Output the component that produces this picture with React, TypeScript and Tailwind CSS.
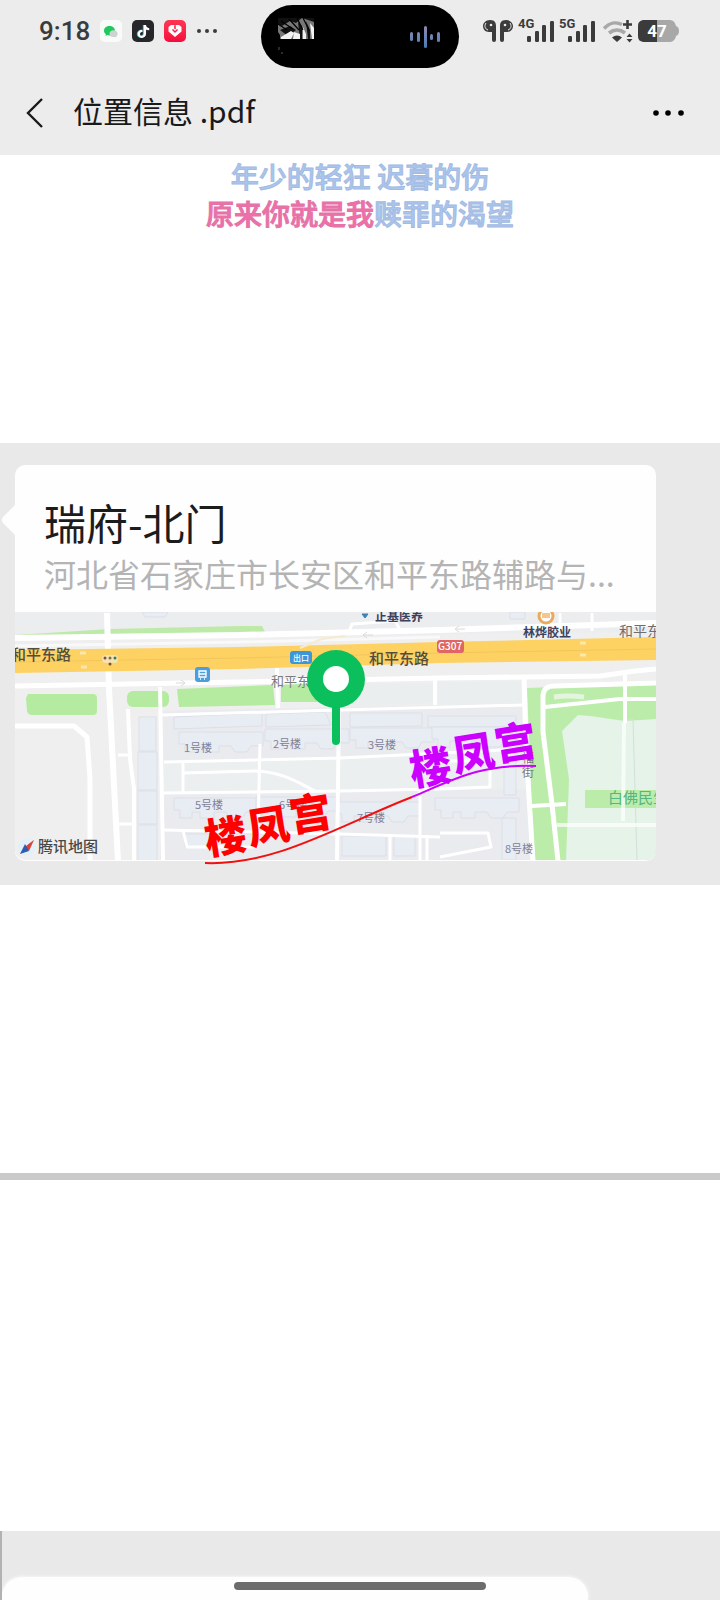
import React from 'react';
import { FaTiktok } from 'react-icons/fa';

const BARS = [
  { x: 0, h: 6 },
  { x: 8, h: 11 },
  { x: 15, h: 17 },
  { x: 23, h: 21 },
];

const BLOCK_LABELS = [
  { text: '1号楼', x: 184, y: 753 },
  { text: '2号楼', x: 273, y: 749 },
  { text: '3号楼', x: 368, y: 750 },
  { text: '5号楼', x: 195, y: 810 },
  { text: '6号楼', x: 279, y: 810 },
  { text: '7号楼', x: 357, y: 823 },
  { text: '8号楼', x: 505, y: 854 },
];

const MARKS = [
  { fill: '#ff0000', glyphs: [{ c: '楼', x: 207, y: 856 }, { c: '凤', x: 250, y: 846 }, { c: '宫', x: 292, y: 833 }] },
  { fill: '#cc00ff', glyphs: [{ c: '楼', x: 412, y: 787 }, { c: '凤', x: 455, y: 773 }, { c: '宫', x: 497, y: 762 }] },
];

// outline of a slab block seen from above, notched along the bottom edge
const SLAB = 'M0 0H84V14H72L68 20H56L52 14H40V20H26V14H18V20H6V12H0Z';

function Signal({ label }: { label: string }) {
  return (
    <span className="flex items-start">
      <span className="h-[22px] w-[9px] overflow-visible text-[13px] leading-[7px] font-bold whitespace-nowrap">{label}</span>
      <svg className="h-[22px] w-[27px]" viewBox="0 0 27 22" fill="#3b3b3b">
        {BARS.map(b => (
          <rect key={b.x} x={b.x} y={22 - b.h} width="4" height={b.h} rx="1.2" />
        ))}
      </svg>
    </span>
  );
}

function StatusBar() {
  return (
    <div className="grid h-[70px] grid-cols-[1fr_198px_1fr] pt-[5px] text-[#3b3b3b]">
      <div className="flex h-[52px] items-center gap-[10px] pl-[39px]">
        <span className="w-[51px] font-[Roboto,sans-serif] text-[26px] leading-none font-medium">9:18</span>
        <span className="size-[22px] shrink-0 rounded-[5px] bg-[#f9fafa]">
          <svg viewBox="0 0 22 22" className="size-full">
            <path d="M9.500 6C6.500 6 4 8 4 10.800c0 1.500.7 2.700 1.900 3.500l-.4 1.700 2-.9c.6.200 1.300.3 2 .3 3 0 5.500-2 5.500-4.700S12.500 6 9.500 6Z" fill="#20c95c" />
            <path d="M13.500 10.300c-2.300 0-4 1.500-4 3.400s1.700 3.400 4 3.400c.5 0 1-.1 1.500-.2l1.500.7-.3-1.300c.9-.6 1.400-1.600 1.400-2.600 0-1.900-1.800-3.400-4.100-3.400Z" fill="#cfd2d2" />
          </svg>
        </span>
        <span className="flex size-[22px] shrink-0 items-center justify-center rounded-[5px] bg-[#27262b] text-white">
          <FaTiktok className="size-[13px] drop-shadow-[-1px_0_0_#3fd0d0]" />
        </span>
        <span className="size-[22px] shrink-0 rounded-[5px] bg-linear-to-b from-[#ff3552] to-[#f5083d]">
          <svg viewBox="0 0 22 22" className="size-full">
            <path d="M11 17 4.500 11.500V7L7 5h3l1 1.500L12 5h3l2.500 2v4.500Z" fill="#fff" />
            <path d="M11 6v3M8.500 9.500 11 12 13.500 9.500" stroke="#f8204a" strokeWidth="1.500" fill="none" />
          </svg>
        </span>
        <svg viewBox="0 0 22 6" className="h-[6px] w-[22px]" fill="#3b3b3b">
          <circle cx="3" cy="3" r="2" />
          <circle cx="11" cy="3" r="2" />
          <circle cx="19" cy="3" r="2" />
        </svg>
      </div>

      <div className="flex h-[63px] items-start justify-between rounded-full bg-black pt-[13px] pr-[19px] pl-[17px]">
        <svg viewBox="0 0 36 36" className="size-[36px]">
          <path d="M0 0H36V21H2V17L0 14Z" fill="#777" />
          <path d="M0 0H24L18 5 12 3 4 8 0 6ZM2 12 12 8 18 12 10 18ZM20 4l4 4v13h-2ZM28 3l4 9v9h-2ZM24 0h12v4l-6-2Z" fill="#111" />
          <path d="M3 19 13 13l3 2-3 6H3ZM16 14l6 2v5h-7ZM25 9l3 7v5h-3ZM32 5l4 5v11h-2Z" fill="#f2f2f2" />
          <path d="M0 6 9 12M3 3l12 8M11 1l10 11M19 0l6 12M25 0l6 12" stroke="#000" strokeWidth="1.200" />
          <path d="M1 29v3M4 34v2" stroke="#555" />
        </svg>
        <svg viewBox="0 0 30 24" className="mt-[7px] h-[24px] w-[30px]">
          <defs>
            <linearGradient id="wave" x1="0" y1="0" x2="0" y2="24" gradientUnits="userSpaceOnUse">
              <stop offset="0" stopColor="#9a86b0" />
              <stop offset="1" stopColor="#3f7fb8" />
            </linearGradient>
          </defs>
          <g fill="url(#wave)">
            <rect x="0" y="7" width="3" height="9" rx="1.500" />
            <rect x="7" y="7" width="3" height="10" rx="1.500" />
            <rect x="14" y="1" width="3" height="22" rx="1.500" />
            <rect x="20" y="9" width="3" height="6" rx="1.500" />
            <rect x="27" y="7" width="3" height="10" rx="1.500" />
          </g>
        </svg>
      </div>

      <div className="flex h-[52px] items-center justify-end gap-[5px] pr-[41px] font-[Roboto,sans-serif]">
        <svg viewBox="0 0 30 22" className="h-[22px] w-[30px]">
          <g fill="#3b3b3b">
            <path d="M7 0c5 0 6 3 6 6v14a2 2 0 0 1-4 0v-8H6C2 12 0 9 0 6s3-6 7-6Z" />
            <path d="M23 0c-5 0-6 3-6 6v14a2 2 0 0 0 4 0v-8h3c4 0 6-3 6-6s-3-6-7-6Z" />
          </g>
          <path d="M3 3C1 6 2 9 5 10M27 3c2 3 1 6-2 7" stroke="#ececec" fill="none" />
          <circle cx="8" cy="5" r="1.300" fill="#ececec" />
          <circle cx="22" cy="5" r="1.300" fill="#ececec" />
        </svg>
        <Signal label="4G" />
        <Signal label="5G" />
        <svg viewBox="0 0 30 23" className="ml-[3px] h-[23px] w-[30px]">
          <path d="M1 8.500C6 3 13 1.500 19 4.500M6 13c5-4 11-4 16 0" stroke="#a8a8a8" strokeWidth="3.600" fill="none" />
          <path d="M9 17.500q5-4 10 0l-5 4.500Z" fill="#3b3b3b" />
          <path d="M24.500 0v9M20 4.500h9" stroke="#3b3b3b" strokeWidth="2.600" />
          <path d="M23.500 17 26.500 13.500 29.500 17ZM23.500 19 26.500 22.500 29.500 19Z" fill="#3b3b3b" />
        </svg>
        <span className="relative flex h-[22px] w-[41px] items-center">
          <svg viewBox="0 0 41 22" className="absolute inset-0 size-full">
            <path d="M7 0h24c4 0 6 2 7 6 4 1 4 9 0 10-1 4-3 6-7 6H7c-5 0-7-2-7-7V7c0-5 2-7 7-7Z" fill="#a8a8a8" />
            <path d="M7 0h12v22H7c-5 0-7-2-7-7V7c0-5 2-7 7-7Z" fill="#3b3b3b" />
          </svg>
          <span className="relative w-[38px] text-center text-[17px] leading-none font-bold text-white">47</span>
        </span>
      </div>
    </div>
  );
}

function TitleBar() {
  return (
    <div className="flex h-[85px] items-center pr-[36px] pl-[25px]">
      <button type="button" aria-label="返回" className="mr-[28px]">
        <svg viewBox="0 0 20 32" className="h-[32px] w-[20px]">
          <path d="M17 2 3 16 17 30" fill="none" stroke="#1a1a1a" strokeWidth="2.400" />
        </svg>
      </button>
      <h1 className="flex-1 pb-[5px] text-[30px] leading-[40px] text-[#191919]">位置信息 .pdf</h1>
      <button type="button" aria-label="更多">
        <svg viewBox="0 0 32 8" className="h-[8px] w-[32px]">
          <circle cx="4" cy="4" r="2.800" />
          <circle cx="16" cy="4" r="2.800" />
          <circle cx="29" cy="4" r="2.800" />
        </svg>
      </button>
    </div>
  );
}

function MapTile() {
  return (
    <svg viewBox="15 613 641 248" className="block h-auto w-full rounded-b-[10px]">
      <rect x="15" y="613" width="641" height="248" fill="#efefef" />
      <path d="M15 613H656V633L15 640Z" fill="#ecedef" />
      <path d="M160 712 525 704 531 861H160Z" fill="#eaebef" />
      <path d="M164 763 338 758 340 792 164 794ZM340 760 520 750 526 790 340 792Z" fill="#ecefef" />
      <path d="M342 684H434V704L342 708ZM438 683H522V704L438 706Z" fill="#eaeeef" />

      {/* greens */}
      <path d="M15 636 110 630 240 627 262 627 265 633 110 637 15 639Z" fill="#bdeaa9" />
      <g fill="#b4eba0">
        <path d="M28 695H93Q97 695 97 699V712Q97 716 93 716H32Q28 716 27 712L26 699Z" />
        <rect x="127" y="692" width="42" height="16" rx="6" />
        <path d="M177 690 273 686 275 706 179 708ZM281 686 322 684V703H281Z" />
      </g>
      <path d="M527 689 656 684V861H534Z" fill="#bcecaa" />
      <path d="M562 732 578 716 590 717 625 722 656 720V861H566L569 780Z" fill="#e5f3e9" />
      <path d="M626 722 633 720 637 861" stroke="#d3dfd8" fill="none" />
      <rect x="585" y="791" width="71" height="18" fill="#bcecaa" />

      {/* buildings */}
      <g fill="#e8ecf3" stroke="#dddfe7">
        <rect x="139" y="718" width="17" height="34" />
        <rect x="138" y="753" width="19" height="38" />
        <rect x="138" y="792" width="19" height="33" />
        <rect x="138" y="826" width="19" height="36" />
        <path d="M174 718 262 714V727L174 730ZM266 715 325 713 331 726 266 728ZM350 714H422V727L350 728ZM428 717H516V728H428Z" />
        <path d={SLAB} transform="translate(179 733)" />
        <path d={SLAB} transform="translate(265 730)" />
        <path d={SLAB} transform="translate(350 729)" />
        <path d={SLAB} transform="translate(432 728)" />
        <path d={SLAB} transform="translate(174 799)" />
        <path d={SLAB} transform="translate(256 798)" />
        <path d={SLAB} transform="translate(336 803)" />
        <path d={SLAB} transform="translate(435 799)" />
        <path d="M185 835H256V848H185ZM342 837H386V857H342ZM394 837H415V857H394Z" />
        <path d="M504 761H516V796H504ZM502 819H516V861H502Z" />
        <path d="M142 613H168L165 618H145ZM510 613H525V620H510Z" />
      </g>

      {/* side streets */}
      <g fill="none" stroke="#fff" strokeLinejoin="round">
        <path d="M15 639 240 636 440 631 656 624" strokeWidth="6" />
        <path d="M15 647 240 643 440 638" strokeWidth="3" opacity=".6" />
        <path d="M15 687 240 683 440 679 600 677 635 672 656 670" strokeWidth="5" />
        <path d="M107 614 109 690 118 862" strokeWidth="6" />
        <path d="M15 727H74L87 738 90 780V862" strokeWidth="5" />
        <path d="M128 710 130 760 134 790V862M160 688 163 862M339 708 337 862M277 669 278 709M435 680V706" strokeWidth="4" />
        <path d="M118 756H132M118 825H134M162 716 340 711 523 706M164 763 340 759 525 750M164 794 340 792 440 790M164 831 340 835 440 838" strokeWidth="3" />
        <path d="M183 763V793M260 745 258 830M183 831 187 848H258M390 836V861M420 790V861M183 774 255 772C285 773 300 785 315 792M440 790 490 788V762H440M440 834H488L491 848 440 858M427 836V861" strokeWidth="3" />
        <path d="M348 636 352 625 395 622 402 634M592 614V632M560 614V632" strokeWidth="3" />
        <path d="M524 678 526 750 533 862" strokeWidth="5" />
        <path d="M558 862 552 805 543 733 543 696C544 689 548 687 554 687L656 684" strokeWidth="5" />
        <path d="M545 708 620 700H656M625 676V724M532 807 566 805" strokeWidth="4" />
        <path d="M557 826H656M624 724 623 822" strokeWidth="4" opacity=".7" />
      </g>

      {/* main road */}
      <path d="M15 651 240 648 440 643 656 638V661L440 664 240 670 15 674Z" fill="#fdd263" />
      <path d="M15 663 240 659 440 654 656 650" stroke="#f3c65a" fill="none" />
      <path d="M300 649 322 640 345 637" stroke="#f7ead0" strokeWidth="2" fill="none" />
      <path d="M80 654h6M81 668h6M580 644h6M580 656h6" stroke="#fbe6ae" strokeWidth="3" />
      <path d="M456 630h9m-6-3-4 3 4 3M364 636h9m-6-3-4 3 4 3M176 684h9m-4-3 4 3-4 3" stroke="#dadada" fill="none" />
      <rect x="102" y="656" width="16" height="8" rx="4" fill="#f5e3b0" />
      <circle cx="105" cy="659" r="1.500" fill="#8d4a3a" />
      <circle cx="110" cy="659" r="1.500" fill="#7c7244" />
      <circle cx="115" cy="659" r="1.500" fill="#387a5c" />
      <circle cx="110" cy="665" r="1.500" fill="#7b5236" />

      {/* points of interest */}
      <rect x="195" y="668" width="15" height="15" rx="3" fill="#4a9fdc" />
      <path d="M199 672h7v6h-7ZM199 675h7M200 680h1m3 0h1" stroke="#fff" strokeWidth="1.300" fill="none" />
      <rect x="290" y="652" width="22" height="13" rx="3" fill="#3b97da" />
      <text x="293" y="662" fontSize="8" fontWeight="500" fill="#fff">出口</text>
      <rect x="437" y="641" width="27" height="13" rx="3" fill="#df6664" />
      <text x="438" y="651" fontSize="10" fontWeight="500" fill="#fff">G307</text>
      <circle cx="546" cy="617" r="7" stroke="#eba95d" strokeWidth="3" fill="#fff" />
      <path d="M542 614h8v5h-8Z" fill="#f5c68e" />
      <path d="M362 615h6l-3 4Z" fill="#3a82b8" stroke="#3a82b8" />

      <g fontSize="15" fontWeight="500" fill="#544c3c">
        <text x="11" y="661">和平东路</text>
        <text x="369" y="665">和平东路</text>
      </g>
      <text x="271" y="687" fontSize="13" fill="#7c7c80">和平东路</text>
      <text x="619" y="637" fontSize="14" fill="#6d6d70">和平东路</text>
      <g fontSize="12" fontWeight="700" fill="#3c415c">
        <text x="375" y="622">正基医养</text>
        <text x="523" y="638">林烨胶业</text>
      </g>
      <g fontSize="11" fill="#7d8199">
        {BLOCK_LABELS.map(l => (
          <text key={l.text} x={l.x} y={l.y}>{l.text}</text>
        ))}
      </g>
      <g fontSize="12" fill="#77777c">
        <text x="522" y="764">福</text>
        <text x="522" y="778">街</text>
      </g>
      <text x="608" y="804" fontSize="15" fill="#55b584">白佛民生</text>
      <path d="M554 698q14-2 30 0" stroke="#e3f5dd" strokeWidth="5" fill="none" />

      {/* provider */}
      <circle cx="27" cy="848" r="9" fill="#e3f0fa" />
      <path d="M34 841 29 852 25 848Z" fill="#d8453b" />
      <path d="M34 841 25 848 20 855Z" fill="#d8453b" />
      <path d="M20 855 29 852 25 845Z" fill="#2f5cae" />
      <text x="38" y="853" fontSize="15" fontWeight="500" fill="#48484a">腾讯地图</text>

      {/* pin */}
      <rect x="332" y="700" width="8" height="46" rx="4" fill="#0bbf5c" />
      <circle cx="336" cy="680" r="29" fill="#0bbf5c" />
      <circle cx="336" cy="680" r="13" fill="#fff" />
    </svg>
  );
}

function Watermark() {
  return (
    <svg viewBox="15 613 641 248" className="pointer-events-none absolute inset-x-0 top-0 h-auto w-full overflow-visible">
      {MARKS.map(m => (
        <g key={m.fill} fill={m.fill} fontSize="42" fontWeight="900">
          {m.glyphs.map(g => (
            <text key={g.c} x={g.x} y={g.y} transform={`rotate(-9 ${g.x} ${g.y})`}>{g.c}</text>
          ))}
        </g>
      ))}
      <path d="M205 864C275 867 340 826 412 798" fill="none" stroke="#f01010" strokeWidth="2" />
      <path d="M412 798C455 780 480 765 536 767" fill="none" stroke="#cc00ff" strokeWidth="2" />
    </svg>
  );
}

function LocationCard() {
  return (
    <article className="relative mr-[64px] ml-[15px] rounded-[10px] bg-[#fefefe]">
      <svg viewBox="0 0 15 32" className="absolute top-[39px] -left-[14px] h-[32px] w-[15px]">
        <path d="M15 0 2 13Q0 16 2 19L15 32Z" fill="#fefefe" />
      </svg>
      <div className="px-[29px] pt-[30px] pb-[15px]">
        <h2 className="text-[42px] leading-[54px] text-[#1c1c1c]">瑞府-北门</h2>
        <p className="truncate text-[32px] leading-[48px] text-[#b4b4b4]">河北省石家庄市长安区和平东路辅路与...</p>
      </div>
      <div className="relative pb-[1px]">
        <MapTile />
        <Watermark />
      </div>
    </article>
  );
}

export default function App() {
  return (
    <div className="relative flex min-h-screen flex-col bg-white font-['Noto_Sans_CJK_SC',sans-serif]">
      <header className="bg-[#ececec]">
        <StatusBar />
        <TitleBar />
      </header>

      <main className="flex flex-1 flex-col">
        <section className="h-[288px] pt-[3px] text-center text-[28px] leading-[37px] font-medium text-[#abc6ee] [-webkit-text-stroke:1px_#a3bbe2]">
          <p>年少的轻狂 迟暮的伤</p>
          <p>
            <span className="text-[#f06fa9] [-webkit-text-stroke:1px_#e274a8]">原来你就是我</span>赎罪的渴望
          </p>
        </section>

        <section className="bg-[#e9e9e9] pt-[22px] pb-[24px]">
          <LocationCard />
        </section>

        <div className="h-[288px]" />
        <hr className="h-[7px] border-0 bg-[#cacaca]" />
        <div className="h-[351px]" />

        <section className="flex-1 overflow-hidden border-l-2 border-[#b2b2b2] bg-[#e9e9e9] pt-[46px]">
          <div className="mr-[132px] h-[23px] rounded-t-[20px] bg-[#fefefe] shadow-[0_0_4px_#fefefe]" />
        </section>
      </main>

      <div className="absolute inset-x-0 bottom-[10px] flex justify-center">
        <div className="h-[8px] w-[252px] rounded-full bg-[#6c6c6c]" />
      </div>
    </div>
  );
}
